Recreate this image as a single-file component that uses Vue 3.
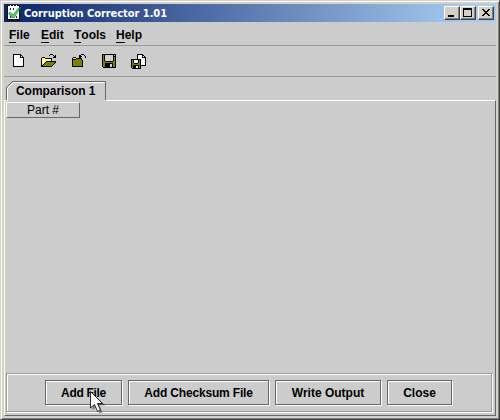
<script setup>
const menus = [['F', 'ile', 'file'], ['E', 'dit', 'edit'], ['T', 'ools', 'tools'], ['H', 'elp', 'help']]
const buttons = [
  { label: 'Add File', cls: 'add' },
  { label: 'Add Checksum File', cls: 'checksum' },
  { label: 'Write Output', cls: 'write' },
  { label: 'Close', cls: 'close' },
]

const palette = { k: '#000', w: '#fff', y: '#ff3', o: '#808000', g: '#d4d0c8' }

// Toolbar glyphs as 16-column pixel maps, one string per row.
const glyphs = {
  new: [
    '',
    '...kkkkkkkk',
    '...kwwwwwwkk',
    '...kwwwwwwkwk',
    '...kwwwwwwkkkk',
    '...kwwwwwwwwwk',
    '...kwwwwwwwwwk',
    '...kwwwwwwwwwk',
    '...kwwwwwwwwwk',
    '...kwwwwwwwwwk',
    '...kwwwwwwwwwk',
    '...kwwwwwwwwwk',
    '...kwwwwwwwwwk',
    '...kkkkkkkkkkk',
  ],
  open: [
    '',
    '..........kkk',
    '.........k...k.k',
    '..............kk',
    '..kkk........kkk',
    '.kywykkkkkkk',
    '.kwywywywywk',
    '.kywywywywyk',
    '.kwywykkkkkkkkkk',
    '.kywykoooooooook',
    '.kwykoooooooook',
    '.kykoooooooook',
    '.kkoooooooook',
    '.kkkkkkkkkkk',
  ],
  shut: [
    '',
    '...........kkk',
    '.........kk...k',
    '.........kkk...k',
    '...kkk...kk....k',
    '..kyyykkkkkk',
    '..kkkkoooook',
    '..koooooooook',
    '..koooooooook',
    '..koooooooook',
    '..koooooooook',
    '..koooooooook',
    '..koooooooook',
    '..kkkkkkkkkkk',
  ],
  save: [
    '',
    '..kkkkkkkkkkkkkk',
    '..kokggggggggkgk',
    '..kokggggggggkkk',
    '..kokggggggggkok',
    '..kokggggggggkok',
    '..kokggggggggkok',
    '..kokggggggggkok',
    '..kookkkkkkkkook',
    '..kooooooooooook',
    '..kookkkkkkkkook',
    '..kookkkkkggkook',
    '..kookkkkkggkook',
    '..kookkkkkggkook',
    '...kkkkkkkkkkkkk',
  ],
  saveAs: [
    '',
    '.......kkkkkk',
    '.......kwwwwkk',
    '.......kwwwwkwk',
    '.......kwwwwkkkk',
    '.......kwwwwwwwk',
    '.kkkkkkkkkkwwwwk',
    '.kokwwwwkokwwwwk',
    '.kokwwwwkokwwwwk',
    '.kokwwwwkokwwwwk',
    '.kookkkkookwwwwk',
    '.kooooooookwwwwk',
    '.kokkkkkkokkkkkk',
    '.kokkkwwkok',
    '.kokkkwwkok',
    '..kkkkkkkkk',
  ],
}

const icons = Object.entries(glyphs).map(([name, rows]) => ({
  name,
  layers: Object.entries(palette).map(([key, fill]) => ({
    fill,
    d: rows.map((row, y) => [...row].map((c, x) => (c === key ? `M${x} ${y}h1v1h-1z` : '')).join('')).join(''),
  })),
}))
</script>

<template>
  <div class="window">
    <header class="titlebar">
      <svg class="appicon" width="14" height="16" viewBox="0 0 14 16">
        <path fill="#111" d="M0 0h13v16H0z" />
        <path fill="#fff" d="M1 1h11v13H1zM3 0h1v1H3zM6 0h1v1H6zM9 0h1v1H9z" />
        <path fill="#222a60" d="M3 3h1v2H3zM6 3h1v2H6zM3 11h1v2H3zM9 11h1v2H9zM6 14h1v1H6z" />
        <path fill="#2fa045" d="M1 8l2.500-1L6 9.500 11 3l3-1-6.500 11H5z" />
        <path fill="#6fd878" d="M2.500 8H4l2 3 5-7 1-.5L7 12H5.500z" />
      </svg>
      <span class="title">Corruption Corrector 1.01</span>
      <div class="controls">
        <i class="ctl"><svg width="14" height="12" shape-rendering="crispEdges"><path d="M3 8h6v2H3z" /></svg></i>
        <i class="ctl"><svg width="14" height="12" shape-rendering="crispEdges"><path fill-rule="evenodd" d="M2 1h9v9H2zM3 3v6h7V3z" /></svg></i>
        <i class="ctl last"><svg width="14" height="12" shape-rendering="crispEdges"><path d="M3 2h2v1h1v1h2V3h1V2h2v1h-1v1H9v1H8v1h1v1h1v1h1v1H9V8H8V7H6v1H5v1H3V8h1V7h1V6h1V5H5V4H4V3H3z" /></svg></i>
      </div>
    </header>
    <div class="client">
      <nav class="menubar">
        <span v-for="m in menus" :key="m[2]" :class="['menu', m[2]]"><span class="key">{{ m[0] }}</span>{{ m[1] }}</span>
      </nav>
      <div class="toolbar">
        <svg v-for="icon in icons" :key="icon.name" width="16" height="16" viewBox="0 0 16 16" shape-rendering="crispEdges">
          <path v-for="layer in icon.layers" :key="layer.fill" :fill="layer.fill" :d="layer.d" />
        </svg>
      </div>
      <div class="tabrow">
        <div class="tab">
          <svg width="100" height="20" viewBox="0 0 100 20" fill="none" shape-rendering="crispEdges">
            <path stroke="#666" d="M.5 19V6.500L6.500.5h93V19" />
            <path stroke="#fff" d="M1.500 20V7.500L7.500 1.500h91.500" />
          </svg>
          <span class="tabtext">Comparison 1</span>
        </div>
      </div>
      <main class="pane">
        <div class="column"><span>Part #</span></div>
        <footer class="actions">
          <button v-for="b in buttons" :key="b.label" :class="b.cls"><span>{{ b.label }}</span></button>
        </footer>
      </main>
    </div>
    <svg class="cursor" width="20" height="28" viewBox="0 0 20 28">
      <path fill="#333" opacity=".5" transform="translate(2.500 2.500)" d="M0 0v17l4-4 3 7 3-1-3-7h6z" />
      <path fill="#fff" stroke="#000" stroke-width=".8" d="M.5.5v16.500l4-3.500 3 7 3-1.300-3-6.700h5z" />
    </svg>
  </div>
</template>

<style>
body { margin: 0; overflow: hidden; }
</style>
<style scoped>
* { box-sizing: border-box; }
.window { position: relative; width: 500px; height: 420px; padding: 3px; background: #d4d0c8; border: 1px solid; border-color: #d4d0c8 #404040 #404040 #d4d0c8; box-shadow: inset 1px 1px #fff, inset -1px -1px #808080; font: bold 12px "Liberation Sans", Arial, sans-serif; color: #000; }
.titlebar { height: 18px; display: flex; align-items: center; background: linear-gradient(90deg, #0a246a, #a6caf0 94%); padding-left: 3px; }
.appicon { flex: none; }
.title { margin-left: 3px; padding-top: 1px; color: #fff; font: bold 11px/18px "DejaVu Sans Condensed", "DejaVu Sans", sans-serif; font-stretch: condensed; white-space: nowrap; letter-spacing: -.04px; }
.controls { margin-left: auto; display: flex; padding-right: 2px; }
.ctl { width: 16px; height: 14px; background: #d4d0c8; border: 1px solid; border-color: #fff #404040 #404040 #fff; box-shadow: inset -1px -1px #808080; }
.ctl svg { display: block; }
.last { margin-left: 2px; }
.client { height: 394px; background: #ccc; display: flex; flex-direction: column; }
.menubar { height: 24px; flex: none; border-bottom: 1px solid #999; display: flex; padding: 1px 0 0 5px; line-height: 24px; }
.menu { white-space: nowrap; height: 22px; }
.file { width: 32px; }
.edit { width: 33px; }
.tools { width: 42px; }
.key { box-shadow: 0 1px #000; display: inline-block; line-height: 14px; }
.toolbar { height: 31px; flex: none; border-bottom: 1px solid #999; display: flex; gap: 14px; padding: 7px 0 0 6px; }
.tabrow { height: 23px; flex: none; padding: 4px 0 0 2px; }
.tab { position: relative; width: 100px; height: 20px; background: #ccc; }
.tab svg { display: block; }
.tabtext { position: absolute; left: 10px; top: 3px; white-space: nowrap; line-height: 14px; letter-spacing: -.05px; }
.pane { flex: 1; display: flex; flex-direction: column; border: 1px solid; border-color: #fff #666 #666 #fff; padding: 1px 2px 3px 1px; }
.column { width: 74px; height: 16px; border: 1px solid; border-color: #fff #666 #666 #fff; text-align: center; font: 12px/15px "Liberation Sans", sans-serif; }
.actions { width: 486px; height: 39px; margin-top: auto; border: 1px solid #999; box-shadow: 1px 1px #fff, inset 1px 1px #fff; display: flex; gap: 6px; padding: 6px 0 0 38px; }
button { height: 25px; padding: 1px 0 0; margin: 0; border: 1px solid #666; box-shadow: 1px 1px #fff, inset 1px 1px #fff; border-radius: 0; background: #ccc; color: #000; font: inherit; white-space: nowrap; }
.add { width: 77px; letter-spacing: -.3px; }
.checksum { width: 141px; letter-spacing: -.17px; }
.write { width: 106px; }
.close { width: 65px; }
.cursor { position: absolute; left: 89px; top: 390px; }
</style>
